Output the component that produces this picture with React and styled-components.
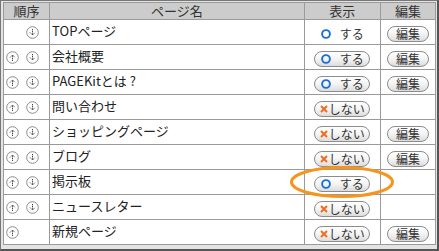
import React from 'react';
import styled, { createGlobalStyle } from 'styled-components';

const Global = createGlobalStyle`
  html, body { margin: 0; padding: 0; background: #fff; }
  body { font-family: "Noto Sans CJK JP", "Liberation Sans", sans-serif; }
`;

const pages = [
  { name: 'TOPページ', up: false, down: true, show: true, edit: true, plain: true },
  { name: '会社概要', up: true, down: true, show: true, edit: true },
  { name: 'PAGEKitとは ?', up: true, down: true, show: true, edit: true },
  { name: '問い合わせ', up: true, down: true, show: false, edit: false },
  { name: 'ショッピングページ', up: true, down: true, show: false, edit: true },
  { name: 'ブログ', up: true, down: true, show: false, edit: true },
  { name: '掲示板', up: true, down: true, show: true, edit: false, marked: true },
  { name: 'ニュースレター', up: true, down: true, show: false, edit: false },
  { name: '新規ページ', up: true, down: false, show: false, edit: true },
];

const Frame = styled.div`
  position: relative;
  width: 439px;
  height: 251px;
  box-sizing: border-box;
  border-top: 1px solid #777;
  border-left: 1px solid #777;
  border-right: 2px solid #555;
  border-bottom: 2px solid #555;
  background: #e4e4e4;
  padding: 1px 2px 0 2px;
`;

const Table = styled.table`
  border-collapse: collapse;
  width: 433px;
  background: #fff;
  font-size: 13px;
  color: #222;
  td, th { border: 1px solid #9a9a9a; padding: 0; }
`;

const Head = styled.th`
  height: 16px;
  background: #cccccc;
  font-weight: normal;
  color: #333;
  font-size: 13px;
  line-height: 16px;
  text-align: center;
  width: ${p => p.$w}px;
`;

const Row = styled.tr`
  height: 25px;
`;

const OrderCell = styled.td`
  padding: 0 0 0 2px !important;
`;

const Arrows = styled.div`
  display: flex;
  gap: 7px;
  align-items: center;
`;

const Slot = styled.span`
  width: 13px;
  height: 13px;
  display: flex;
`;

const NameCell = styled.td`
  padding: 0 0 2px 2px !important;
  white-space: nowrap;
  line-height: 20px;
`;

const Center = styled.td`
  text-align: center;
  vertical-align: middle;
`;

const Pill = styled.span`
  display: inline-flex;
  align-items: center;
  justify-content: center;
  box-sizing: border-box;
  height: 16px;
  width: ${p => p.$w}px;
  border-radius: 8px;
  border: 1px solid ${p => (p.$plain ? 'transparent' : '#8c8c8c')};
  background: ${p => (p.$plain ? 'transparent' : 'linear-gradient(#ffffff, #f4f4f4 50%, #dcdcdc)')};
  font-size: 12px;
  color: #333;
  gap: ${p => p.$gap || 0}px;
  line-height: 1;
  vertical-align: middle;
`;

const Mark = styled.svg`
  flex: none;
`;

const Ring = styled.svg`
  position: absolute;
  left: 288px;
  top: 164px;
  pointer-events: none;
`;

const ArrowIcon = ({ up }) => (
  <svg width="13" height="13" viewBox="0 0 13 13">
    <circle cx="6.5" cy="6.5" r="5.8" fill="#fff" stroke="#8a8a8a" strokeWidth="1" />
    {up ? (
      <path d="M6.5 10V4M4 6.5l2.5-2.5 2.5 2.5" stroke="#444" strokeWidth="1" fill="none" strokeDasharray="1.2 0.6" />
    ) : (
      <path d="M6.5 3v6M4 6.5l2.5 2.5 2.5-2.5" stroke="#444" strokeWidth="1" fill="none" strokeDasharray="1.2 0.6" />
    )}
  </svg>
);

const ShowButton = ({ on, plain }) =>
  on ? (
    <Pill $w={56} $gap={9} $plain={plain}>
      <Mark width="10" height="10" viewBox="0 0 10 10">
        <circle cx="5" cy="5" r="3.9" fill="none" stroke="#1a6fd1" strokeWidth="1.9" />
      </Mark>
      <span>する</span>
    </Pill>
  ) : (
    <Pill $w={56} $gap={1}>
      <Mark width="8" height="8" viewBox="0 0 8 8">
        <path d="M1 1l6 6M7 1L1 7" stroke="#f26a1b" strokeWidth="1.9" />
      </Mark>
      <span>しない</span>
    </Pill>
  );

export default function App() {
  return (
    <>
      <Global />
      <Frame>
        <Table>
          <thead>
            <tr>
              <Head $w={45}>順序</Head>
              <Head $w={253}>ページ名</Head>
              <Head $w={75}>表示</Head>
              <Head $w={54}>編集</Head>
            </tr>
          </thead>
          <tbody>
            {pages.map(p => (
              <Row key={p.name}>
                <OrderCell>
                  <Arrows>
                    <Slot>{p.up && <ArrowIcon up />}</Slot>
                    <Slot>{p.down && <ArrowIcon />}</Slot>
                  </Arrows>
                </OrderCell>
                <NameCell>{p.name}</NameCell>
                <Center>
                  <ShowButton on={p.show} plain={p.plain} />
                </Center>
                <Center>{p.edit && <Pill $w={42}>編集</Pill>}</Center>
              </Row>
            ))}
          </tbody>
        </Table>
        <Ring width="106" height="34" viewBox="0 0 106 34">
          <ellipse cx="53" cy="17" rx="50.5" ry="14.5" fill="none" stroke="#f7941d" strokeWidth="3" />
        </Ring>
      </Frame>
    </>
  );
}
